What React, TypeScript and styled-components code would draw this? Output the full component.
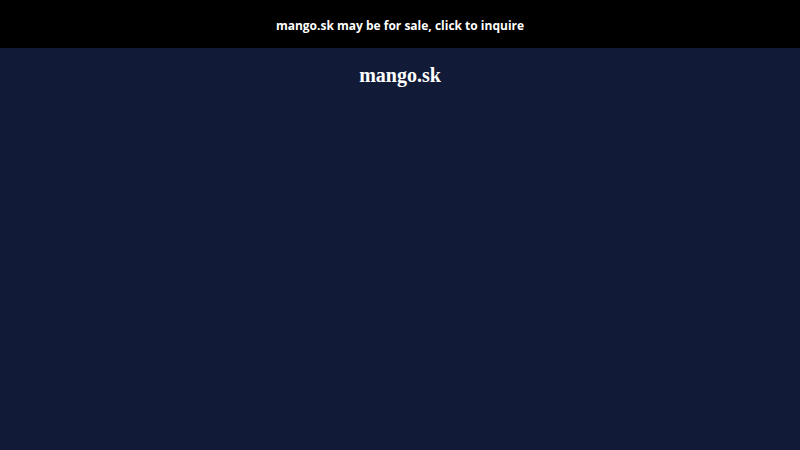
import React from "react"
import styled, { createGlobalStyle } from "styled-components"

const GlobalStyle = createGlobalStyle`
  html, body {
    margin: 0;
    padding: 0;
    height: 100%;
    background: #111b37;
  }
  #root {
    min-height: 100vh;
  }
`

const Page = styled.div`
  display: flex;
  flex-direction: column;
  min-height: 100vh;
  background: #111b37;
`

const SaleBar = styled.a`
  display: flex;
  align-items: center;
  justify-content: center;
  box-sizing: border-box;
  height: 48px;
  padding-top: 2px;
  background: #000;
  color: #fff;
  font-family: "Open Sans", "Noto Sans", sans-serif;
  font-weight: 700;
  font-size: 12px;
  text-decoration: none;
  cursor: pointer;
`

const Title = styled.h1`
  margin: 15px 0 0;
  text-align: center;
  color: #fff;
  font-family: "Liberation Serif", "Times New Roman", serif;
  font-weight: 700;
  font-size: 20px;
  line-height: 24px;
`

const App = () => (
  <>
    <GlobalStyle />
    <Page>
      <SaleBar>mango.sk may be for sale, click to inquire</SaleBar>
      <Title>mango.sk</Title>
    </Page>
  </>
)

export default App
